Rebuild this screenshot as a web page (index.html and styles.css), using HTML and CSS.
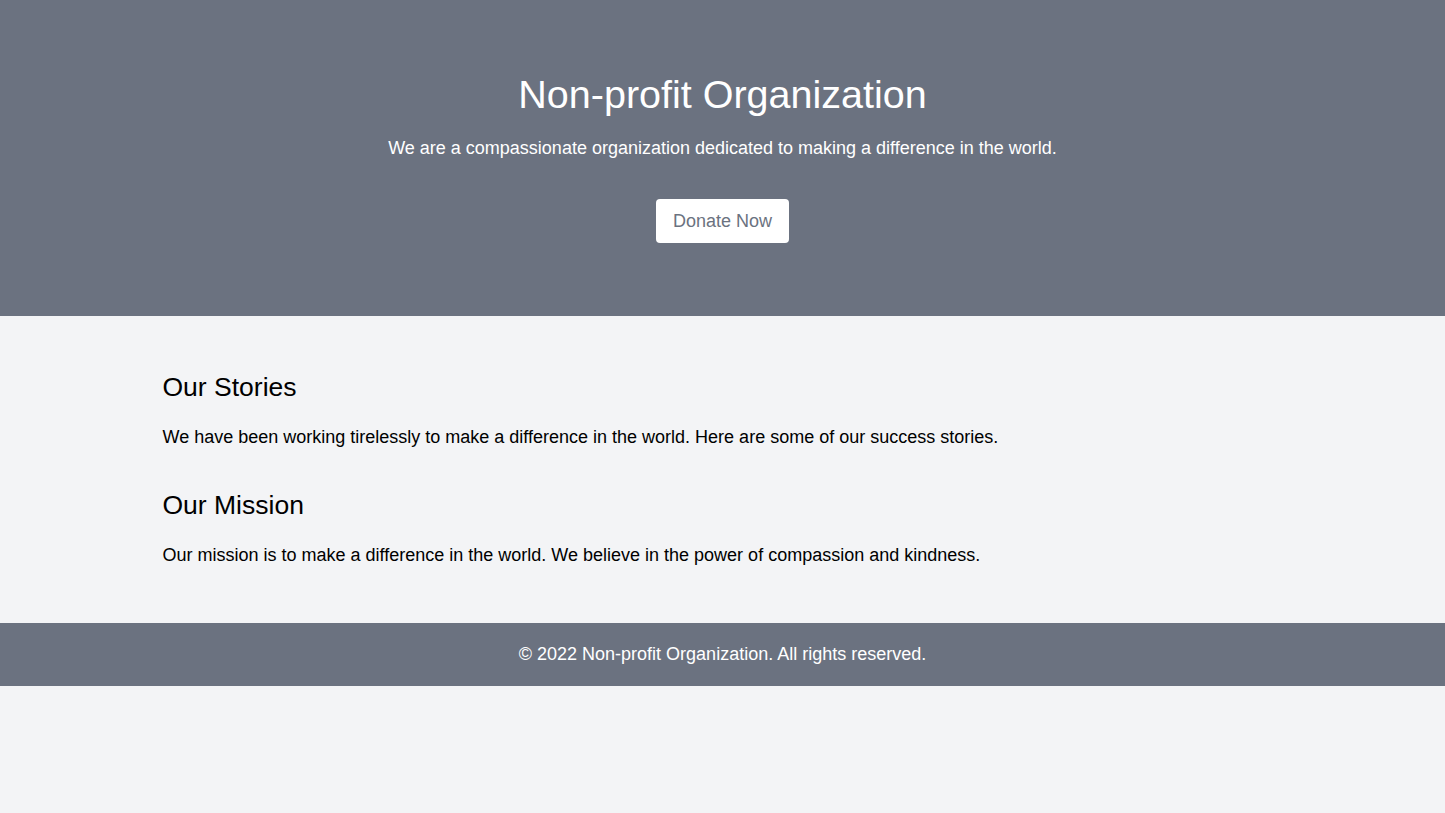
FILE: index.html
```html
<!DOCTYPE html>
<html lang="en">
<head>
<meta charset="utf-8">
<title>Non-profit Organization</title>
<link rel="stylesheet" href="styles.css">
</head>
<body>
<header class="hero">
  <h1 class="hero-title">Non-profit Organization</h1>
  <p class="hero-sub">We are a compassionate organization dedicated to making a difference in the world.</p>
  <a class="donate" href="#">Donate Now</a>
</header>
<main class="content">
  <section class="block">
    <h2 class="block-title">Our Stories</h2>
    <p class="block-text">We have been working tirelessly to make a difference in the world. Here are some of our success stories.</p>
  </section>
  <section class="block">
    <h2 class="block-title">Our Mission</h2>
    <p class="block-text">Our mission is to make a difference in the world. We believe in the power of compassion and kindness.</p>
  </section>
</main>
<footer class="footer">
  <p>© 2022 Non-profit Organization. All rights reserved.</p>
</footer>
</body>
</html>
```
FILE: styles.css
```css
* { box-sizing: border-box; }
html, body { margin: 0; padding: 0; }
body {
  background: #f3f4f6;
  font-family: "Liberation Sans", Arial, sans-serif;
  color: #000;
  min-height: 813px;
}
.hero {
  background: #6b7280;
  color: #fff;
  text-align: center;
  padding: 70px 0 73px;
  display: flex;
  flex-direction: column;
  align-items: center;
}
.hero-title {
  margin: 0;
  font-size: 39.5px;
  line-height: 48px;
  font-weight: 400;
}
.hero-sub {
  margin: 16px 0 0;
  font-size: 18px;
  line-height: 28px;
}
.donate {
  margin-top: 37px;
  background: #fff;
  color: #6b7280;
  text-decoration: none;
  font-size: 18px;
  line-height: 28px;
  padding: 8px 17px;
  border-radius: 4px;
}
.content {
  max-width: 1280px;
  margin: 0 auto;
  padding: 54px 80px 17px;
}
.block { margin-bottom: 37px; }
.block-title {
  margin: 0 0 19px;
  font-size: 26.5px;
  line-height: 34px;
  font-weight: 400;
}
.block-text {
  margin: 0;
  font-size: 18px;
  line-height: 28px;
}
.footer {
  background: #6b7280;
  color: #fff;
  text-align: center;
  padding: 17px 0 18px;
}
.footer p { margin: 0; font-size: 18px; line-height: 28px; }
```
